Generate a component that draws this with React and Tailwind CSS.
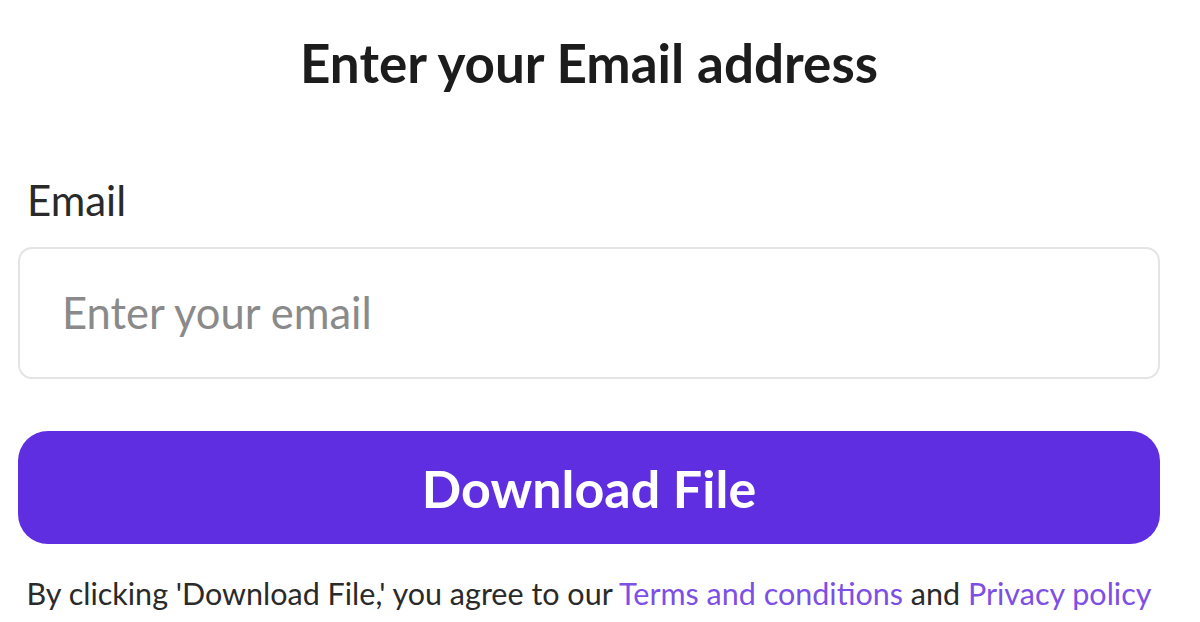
import React from "react";

export default function App() {
  return (
    <div className="w-[1200px] h-[622px] bg-white pl-[18px] pr-[40px] font-['Lato',sans-serif] overflow-hidden">
      <h1 className="pt-[33px] h-[98px] text-center text-[53px] leading-[60px] font-bold text-[#1c1c1c]">
        Enter your Email address
      </h1>
      <div className="mt-[77px] ml-[9px] h-[50px] text-[42px] leading-[50px] text-[#2a2a2a]">Email</div>
      <div className="mt-[22px] h-[132px] rounded-[14px] border-2 border-[#e4e4e4] flex items-center px-[42px]">
        <span className="text-[43.5px] text-[#8a8a8a]">Enter your email</span>
      </div>
      <button className="mt-[52px] w-full h-[113px] rounded-[30px] bg-[#5f2ee0] text-white text-[52px] font-bold flex items-center justify-center">
        Download File
      </button>
      <p className="mt-[29px] text-center text-[30.5px] leading-[40px] text-[#2a2a2a] whitespace-nowrap">
        By clicking 'Download File,' you agree to our{" "}
        <span className="text-[#7d4fe6]">Terms and conditions</span> and{" "}
        <span className="text-[#7d4fe6]">Privacy policy</span>
      </p>
    </div>
  );
}
